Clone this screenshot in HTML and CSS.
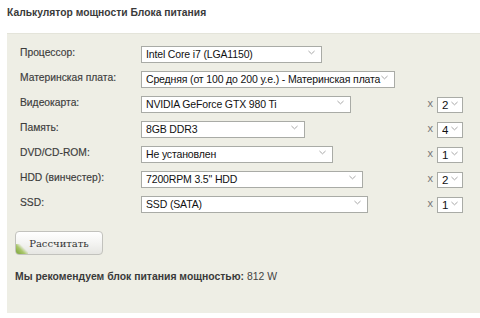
FILE: index.html
```html
<!DOCTYPE html>
<html lang="ru">
<head>
<meta charset="utf-8">
<title>Калькулятор мощности Блока питания</title>
<link rel="stylesheet" href="styles.css">
</head>
<body>
<h1 class="title">Калькулятор мощности Блока питания</h1>
<div class="panel">
  <div class="form">
    <div class="row">
      <label class="lbl">Процессор:</label>
      <span class="sel w-cpu"><select><option>Intel Core i7 (LGA1150)</option></select><svg class="chev" viewBox="0 0 8 5"><path d="M0.5 0.8 L4 4 L7.5 0.8"/></svg></span>
    </div>
    <div class="row">
      <label class="lbl">Материнская плата:</label>
      <span class="sel w-mb"><select><option>Средняя (от 100 до 200 у.е.) - Материнская плата</option></select><svg class="chev" viewBox="0 0 8 5"><path d="M0.5 0.8 L4 4 L7.5 0.8"/></svg></span>
    </div>
    <div class="row">
      <label class="lbl">Видеокарта:</label>
      <span class="sel w-gpu"><select><option>NVIDIA GeForce GTX 980 Ti</option></select><svg class="chev" viewBox="0 0 8 5"><path d="M0.5 0.8 L4 4 L7.5 0.8"/></svg></span>
      <span class="qty"><span class="x">x</span><span class="sel small"><select><option>2</option></select><svg class="chev" viewBox="0 0 8 5"><path d="M0.5 0.8 L4 4 L7.5 0.8"/></svg></span></span>
    </div>
    <div class="row">
      <label class="lbl">Память:</label>
      <span class="sel w-ram"><select><option>8GB DDR3</option></select><svg class="chev" viewBox="0 0 8 5"><path d="M0.5 0.8 L4 4 L7.5 0.8"/></svg></span>
      <span class="qty"><span class="x">x</span><span class="sel small"><select><option>4</option></select><svg class="chev" viewBox="0 0 8 5"><path d="M0.5 0.8 L4 4 L7.5 0.8"/></svg></span></span>
    </div>
    <div class="row">
      <label class="lbl">DVD/CD-ROM:</label>
      <span class="sel w-dvd"><select><option>Не установлен</option></select><svg class="chev" viewBox="0 0 8 5"><path d="M0.5 0.8 L4 4 L7.5 0.8"/></svg></span>
      <span class="qty"><span class="x">x</span><span class="sel small"><select><option>1</option></select><svg class="chev" viewBox="0 0 8 5"><path d="M0.5 0.8 L4 4 L7.5 0.8"/></svg></span></span>
    </div>
    <div class="row">
      <label class="lbl">HDD (винчестер):</label>
      <span class="sel w-hdd"><select><option>7200RPM 3.5" HDD</option></select><svg class="chev" viewBox="0 0 8 5"><path d="M0.5 0.8 L4 4 L7.5 0.8"/></svg></span>
      <span class="qty"><span class="x">x</span><span class="sel small"><select><option>2</option></select><svg class="chev" viewBox="0 0 8 5"><path d="M0.5 0.8 L4 4 L7.5 0.8"/></svg></span></span>
    </div>
    <div class="row">
      <label class="lbl">SSD:</label>
      <span class="sel w-ssd"><select><option>SSD (SATA)</option></select><svg class="chev" viewBox="0 0 8 5"><path d="M0.5 0.8 L4 4 L7.5 0.8"/></svg></span>
      <span class="qty"><span class="x">x</span><span class="sel small"><select><option>1</option></select><svg class="chev" viewBox="0 0 8 5"><path d="M0.5 0.8 L4 4 L7.5 0.8"/></svg></span></span>
    </div>
  </div>
  <button class="btn" type="button">Рассчитать</button>
  <p class="result"><b>Мы рекомендуем блок питания мощностью:</b> 812 W</p>
</div>
</body>
</html>
```
FILE: styles.css
```css
html, body {
  margin: 0;
  padding: 0;
  background: #fff;
}
body {
  padding: 0 0 0 7px;
  font-family: "Liberation Sans", Arial, sans-serif;
  color: #333;
}
.title {
  margin: 0;
  padding-top: 6px;
  height: 33px;
  box-sizing: border-box;
  font-size: 10.3px;
  line-height: 14px;
  font-weight: bold;
  color: #3a3a3a;
}
.panel {
  background: #eeeee5;
  border-top: 1px solid #e4e4da;
  height: 280px;
  box-sizing: border-box;
  padding: 10px 17px 0 8px;
}
.form {
  display: flex;
  flex-direction: column;
  gap: 8px;
  padding-left: 5px;
}
.row {
  display: flex;
  align-items: center;
  height: 17px;
}
.lbl {
  width: 121px;
  flex: none;
  font-size: 10.3px;
  color: #3c3c3c;
  -webkit-text-stroke: 0.15px #3c3c3c;
}
.sel {
  position: relative;
  display: inline-block;
  height: 17px;
  flex: none;
}
.sel select {
  appearance: none;
  -webkit-appearance: none;
  width: 100%;
  height: 100%;
  margin: 0;
  box-sizing: border-box;
  border: 1px solid #a9aba6;
  border-radius: 0;
  background: #fff;
  padding: 0 0 0 4px;
  font-family: "Liberation Sans", Arial, sans-serif;
  font-size: 10.5px;
  letter-spacing: -0.15px;
  color: #111;
}
.chev {
  position: absolute;
  right: 7px;
  top: 6px;
  width: 7px;
  height: 5px;
  fill: none;
  stroke: #9a9a9a;
  stroke-width: 1;
}
.w-cpu { width: 181px; }
.w-mb { width: 254px; }
.w-gpu { width: 210px; }
.w-ram { width: 164px; }
.w-dvd { width: 192px; }
.w-hdd { width: 222px; }
.w-ssd { width: 227px; }
.qty {
  margin-left: auto;
  display: flex;
  align-items: center;
  gap: 4px;
}
.x {
  font-size: 11px;
  color: #777;
}
.sel.small {
  width: 26px;
  height: 16px;
}
.sel.small select {
  padding-left: 4px;
  font-size: 11.5px;
  letter-spacing: 0;
}
.sel.small .chev {
  right: 5px;
}
.btn {
  position: relative;
  display: block;
  margin: 20px 0 0 0;
  width: 88px;
  height: 24px;
  border: 1px solid #c2c2bd;
  border-radius: 4px;
  background: linear-gradient(#ffffff, #f4f4f2 50%, #e6e6e2);
  font-family: "DejaVu Serif", "Liberation Serif", serif;
  font-size: 10px;
  color: #333;
  overflow: hidden;
  padding: 0;
}
.btn::before {
  content: "";
  position: absolute;
  left: 0;
  bottom: 0;
  width: 12px;
  height: 10px;
  background: linear-gradient(45deg, #7aa33a 0%, #a9c66a 40%, rgba(200, 220, 150, 0) 65%);
}
.result {
  margin: 16px 0 0 0;
  font-size: 10.4px;
  color: #444;
}
.result b {
  color: #3a3a3a;
}
```
